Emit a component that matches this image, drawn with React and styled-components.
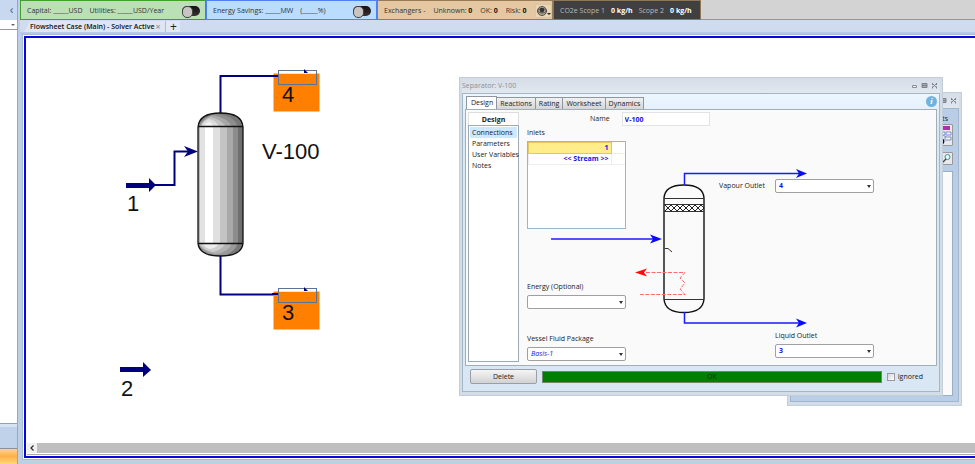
import styled, { createGlobalStyle } from 'styled-components';
import { useState } from 'react';

const flowStreams = [
  { id: '4', y: 70 },
  { id: '3', y: 288 },
];

const vesselBands = [
  [198, 2, '#b4b4b4'],
  [200, 5, '#e2e2e2'],
  [205, 8, '#ffffff'],
  [213, 7, '#e0e0e0'],
  [220, 7, '#c3c3c3'],
  [227, 6, '#a9a9a9'],
  [233, 5, '#8c8c8c'],
  [238, 6, '#6e6e6e'],
];

const tabs = ['Design', 'Reactions', 'Rating', 'Worksheet', 'Dynamics'];
const pages = ['Connections', 'Parameters', 'User Variables', 'Notes'];

function Flowsheet() {
  return (
    <Drawing aria-label='Flowsheet'>
      <defs>
        <clipPath id='vessel'>
          <path d='M198 127 Q199 113 220.5 113 Q242 113 243 127 V243 Q242 256 220.5 256 Q199 256 198 243 Z' />
        </clipPath>
      </defs>
      <g transform='translate(-27 -39)'>
        <g fill='none' stroke='#00007f' strokeWidth='2'>
          <path d='M154 185 H174.500 V151.500 H188' />
          <path d='M220.500 114 V76 H278' />
          <path d='M220.500 256 V294.500 H278' />
        </g>
        <g fill='#00007f'>
          <path d='M126 183 H149 V178 L156 185 L149 192 V188 H126 Z' />
          <path d='M120 367 H143 V362 L151 370 L143 377 V372 H120 Z' />
          <path d='M184 146 L198 151.500 L184 157 L188 151.500 Z' />
        </g>

        <g clipPath='url(#vessel)'>
          {vesselBands.map(([x, w, fill]) => <rect key={x} x={x} y='112' width={w} height='146' fill={fill} />)}
          <rect x='198' y='112' width='46' height='15' fill='#777' />
          <path d='M198 127 Q202 116 216 114 Q234 115 238 127 Z' fill='#8e8e8e' />
          <path d='M199 127 Q204 117 213 115 Q228 118 232 127 Z' fill='#a8a8a8' />
          <path d='M200 127 Q204 119 211 117 Q222 120 226 127 Z' fill='#c4c4c4' />
          <path d='M201 127 Q204 120 209 119 Q217 121 219 127 Z' fill='#dedede' />
          <path d='M203 127 Q206 122 210 122 Q213 124 213 127 Z' fill='#f2f2f2' />
          <rect x='198' y='243' width='46' height='15' fill='#777' />
          <path d='M198 243 H238 Q234 255 217 257 Q202 254 198 243 Z' fill='#999' />
          <path d='M198 243 H232 Q229 252 216 254 Q203 252 198 243 Z' fill='#b2b2b2' />
          <path d='M199 243 H226 Q222 250 213 252 Q203 250 199 243 Z' fill='#cecece' />
          <path d='M202 243 H219 Q217 248 210 249 Q205 248 202 243 Z' fill='#ececec' />
        </g>
        <path
          d='M198 127 Q199 113 220.500 113 Q242 113 243 127 V243 Q242 256 220.500 256 Q199 256 198 243 Z M198 126.500 H243 M198 243.500 H243'
          fill='none' stroke='#111' strokeWidth='1.300'
        />

        {flowStreams.map(({ id, y }) => (
          <g key={id}>
            <rect x='273.500' y={y + 3.5} width='46' height='38' fill='#ff8000' />
            <path d={`M272 ${y + 6} H278`} stroke='#00007f' strokeWidth='2' />
            <path d={`M279 ${y + 1} H316 V${y + 3.5} H279 Z`} fill='#fff' />
            <rect x='278.500' y={y + 0.5} width='38' height='14' fill='none' stroke='#5c7494' />
            <path d={`M304 ${y - 1} L308 ${y + 3} H304 Z`} fill='#00007f' />
            <FlowLabel x='282' y={y + 32}>{id}</FlowLabel>
          </g>
        ))}
        <FlowLabel x='127' y='211'>1</FlowLabel>
        <FlowLabel x='121' y='396'>2</FlowLabel>
        <FlowLabel x='262' y='159'>V-100</FlowLabel>
      </g>
    </Drawing>
  );
}

function SeparatorDiagram() {
  return (
    <DiagramLayer aria-hidden='true'>
      <g transform='translate(-519 -110)'>
        <path d='M664 198 Q665 185 684 185 Q703 185 704 198 V299 Q703 312.500 684 312.500 Q665 312.500 664 299 Z' fill='#fafafa' stroke='#111' strokeWidth='1.400' />
        <path d='M664 198.500 H704 M664 204.500 H704 M664 211.500 H704 M664 299.500 H704' stroke='#333' fill='none' />
        <path
          d='M665 205 L671 211 L677 205 L683 211 L689 205 L695 211 L701 205 L704 208 M665 211 L671 205 L677 211 L683 205 L689 211 L695 205 L701 211 L704 208'
          fill='none' stroke='#222'
        />
        <path d='M665 248.500 H668 L672 252' fill='none' stroke='#333' />
        <g fill='none' stroke='#1a1aff' strokeWidth='1.500'>
          <path d='M684.500 185 V173.500 H799' />
          <path d='M684.500 312 V323 H799' />
          <path d='M551 239 H653' />
        </g>
        <g fill='#0a0aff'>
          <path d='M796 169 L807 173.500 L796 178 L799 173.500 Z' />
          <path d='M796 318.500 L807 323 L796 327.500 L799 323 Z' />
          <path d='M650 234.500 L662 239 L650 243.500 L653 239 Z' />
        </g>
        <path d='M646 272.500 H685 L680 278 L685 283 L680 289 L685 294.500 H640' fill='none' stroke='#ff6b6b' strokeDasharray='4 1.500' />
        <path d='M635 272.500 L647 268.500 L644 272.500 L647 276.500 Z' fill='#ff0a0a' />
      </g>
    </DiagramLayer>
  );
}

function WindowButtons() {
  return (
    <ButtonGlyphs viewBox='0 0 28 8' aria-hidden='true'>
      <path d='M2.500 3.500 H6.500 V5.500 H2.500 Z' fill='#eee' stroke='#8a8f9a' />
      <path d='M12 1.500 H17 V5.500 H12 Z M12 3.500 H17' fill='#aaa' stroke='#7d8291' />
      <path d='M22.500 1.500 L26.500 5.500 M26.500 1.500 L22.500 5.500 M22.500 1 V3 M26.500 1 V3 M22.500 4.500 V6.500 M26.500 4.500 V6.500' stroke='#7d8291' />
    </ButtonGlyphs>
  );
}

function Combo({ id, label, value, inline, italic }) {
  return (
    <Field $inline={inline}>
      <label htmlFor={id}>{label}</label>
      <SelectBox>
        <Select id={id} defaultValue={value} $italic={italic}>
          <option>{value}</option>
        </Select>
      </SelectBox>
    </Field>
  );
}

function StatusBar() {
  return (
    <Toolbar>
      <Gauge $width={186} $gap={7} $border='#41a02c' $background='#bce0b6'>
        <span>Capital: _____USD</span>
        <span>Utilities: _____USD/Year</span>
        <Toggle type='checkbox' aria-label='Capital and utilities' />
      </Gauge>
      <Gauge $width={171} $gap={7} $border='#4b82f5' $background='#b9dcff'>
        <span>Energy Savings: _____MW</span>
        <span>(_____%)</span>
        <Toggle type='checkbox' aria-label='Energy savings' />
      </Gauge>
      <Gauge $width={176} $gap={8} $border='#967b58' $background='#e5c8a2'>
        <span>Exchangers -</span>
        <span>Unknown: <b>0</b></span>
        <span>OK: <b>0</b></span>
        <span>Risk: <b>0</b></span>
        <EyeButton aria-label='Exchanger view'>
          <svg width='15' height='12' viewBox='0 0 15 12'>
            <circle cx='6' cy='6' r='4.500' fill='#aaa493' stroke='#5b5348' />
            <path d='M1 6 Q6 1 11 6 Q6 10 1 6' fill='none' stroke='#5b5348' />
            <circle cx='6' cy='5' r='2.300' fill='#333' />
            <path d='M11 8 H15 L13 10 Z' fill='#222' />
          </svg>
        </EyeButton>
      </Gauge>
      <Gauge $width={148} $gap={6} $border='#8e7656' $background='#404040' $color='#b9b9b9'>
        <span>CO2e Scope 1</span>
        <b>0 kg/h</b>
        <span>Scope 2</span>
        <b>0 kg/h</b>
      </Gauge>
    </Toolbar>
  );
}

function SeparatorWindow() {
  const [name, setName] = useState('V-100');

  return (
    <Dialog role='dialog' aria-label='Separator: V-100'>
      <TitleBar>
        <span>Separator: V-100</span>
        <WindowButtons />
      </TitleBar>
      <DialogBody>
        <TabRow role='tablist'>
          {tabs.map((tab, i) => <Tab key={tab} role='tab' aria-selected={i === 0} $active={i === 0}>{tab}</Tab>)}
          <Info aria-label='Information'>i</Info>
        </TabRow>
        <TabPage>
          <Side>
            <SideTitle>Design</SideTitle>
            <SideList>
              {pages.map((page, i) => <SideItem key={page} $active={i === 0}>{page}</SideItem>)}
            </SideList>
          </Side>
          <Form>
            <SeparatorDiagram />
            <NameRow>
              <label htmlFor='name'>Name</label>
              <NameInput id='name' value={name} onChange={(e) => setName(e.target.value)} />
            </NameRow>
            <Columns>
              <InletColumn>
                <div>
                  <p id='inlets'>Inlets</p>
                  <InletBox>
                    <InletTable aria-labelledby='inlets'>
                      <tbody>
                        <InletRow $active><td>1</td><td /></InletRow>
                        <InletRow><td>&lt;&lt; Stream &gt;&gt;</td><td /></InletRow>
                      </tbody>
                    </InletTable>
                  </InletBox>
                </div>
                <PackageFields>
                  <Combo id='energy' label='Energy (Optional)' value='' />
                  <Combo id='fluid' label='Vessel Fluid Package' value='Basis-1' italic />
                </PackageFields>
              </InletColumn>
              <OutletColumn>
                <Combo id='vapour' label='Vapour Outlet' value='4' inline />
                <Combo id='liquid' label='Liquid Outlet' value='3' />
              </OutletColumn>
            </Columns>
          </Form>
        </TabPage>
        <Footer>
          <DeleteButton>Delete</DeleteButton>
          <Status role='status'>OK</Status>
          <Ignored>
            <input type='checkbox' />
            Ignored
          </Ignored>
        </Footer>
      </DialogBody>
    </Dialog>
  );
}

function BackWindow() {
  return (
    <BackDialog>
      <TitleBar>
        <span />
        <WindowButtons />
      </TitleBar>
      <BackBody>
        <p>ts</p>
        <ToolButton $height={22} aria-label='Charts'>
          <svg width='12' height='20' viewBox='0 0 12 20'>
            <rect x='1' y='1' width='9' height='4' fill='#b32bb8' />
            <path d='M1 7 H5 V10 H1 M6 7 H11 V10 H6 Z M5 12 H11 V15 H5 Z M3 10 L6 12' fill='#eef3ff' stroke='#7f91be' />
            <path d='M2 14 Q5 16 2 19' fill='none' stroke='#111' strokeWidth='2' />
          </svg>
        </ToolButton>
        <ToolButton $height={13} aria-label='Find'>
          <svg width='11' height='11' viewBox='0 0 11 11'>
            <circle cx='6.500' cy='4' r='2.500' fill='#dff' stroke='#478b88' />
            <path d='M5 6 L1 10' stroke='#4b4639' strokeWidth='1.500' />
          </svg>
        </ToolButton>
        <BackPanel />
      </BackBody>
    </BackDialog>
  );
}

export default function App() {
  return (
    <>
      <GlobalStyle />
      <Page>
        <NavPane>
          <NavHeader aria-label='Collapse'>‹</NavHeader>
          <NavFilter />
          <NavTree />
          <NavGroup />
          <NavGroup $active />
        </NavPane>
        <Main>
          <StatusBar />
          <DocumentTabs>
            <DocumentTab>
              Flowsheet Case (Main) - Solver Active
              <CloseTab aria-label='Close tab'>×</CloseTab>
            </DocumentTab>
            <AddTab aria-label='New tab'>+</AddTab>
          </DocumentTabs>
          <Frame>
            <Canvas>
              <Flowsheet />
              <BackWindow />
              <SeparatorWindow />
            </Canvas>
            <ScrollBar>
              <button aria-label='Scroll left'>
                <svg width='4' height='6' viewBox='0 0 4 6'><path d='M3.500 0.500 L1 3 L3.500 5.500' fill='none' stroke='#333' strokeWidth='1.300' /></svg>
              </button>
            </ScrollBar>
          </Frame>
        </Main>
      </Page>
    </>
  );
}

const GlobalStyle = createGlobalStyle`
  * {
    box-sizing: border-box;
  }

  body {
    margin: 0;
    overflow: hidden;
    font-family: 'Open Sans', 'Noto Sans', sans-serif;
    font-size: 7px;
    line-height: 10px;
    color: #222;
  }

  button, input, select {
    margin: 0;
    padding: 0;
    font: inherit;
    color: inherit;
  }

  p {
    margin: 0;
  }
`;

const Page = styled.div`
  display: flex;
  height: 100vh;
  background: #bdd0e6;
`;

const NavPane = styled.nav`
  flex: none;
  display: flex;
  flex-direction: column;
  width: 18px;
  border-right: 1px solid #94a9c0;
`;

const NavHeader = styled.button`
  height: 20px;
  padding-left: 6px;
  border: 0;
  background: #c8d8f0;
  color: #4a5f85;
  font-size: 12px;
`;

const NavFilter = styled.div`
  display: flex;
  align-items: center;
  justify-content: flex-end;
  height: 10px;
  padding-right: 2px;
  background: #fff;
  border-bottom: 1px solid #999;

  &::after {
    content: '';
    border: 2px solid transparent;
    border-top-color: #666;
    border-bottom: 0;
  }
`;

const NavTree = styled.div`
  flex: 1;
  background: #fff;
  border-bottom: 1px solid #8fa3b8;
`;

const NavGroup = styled.div`
  height: ${({ $active }) => ($active ? '16px' : '24px')};
  border-top: ${({ $active }) => ($active ? '1px solid #8c8f95' : '3px solid #d5e3f2')};
  background: ${({ $active }) => ($active ? 'linear-gradient(#ffd196, #ffb04c 50%, #ffd879)' : '#bfd2ea')};
`;

const Main = styled.main`
  flex: 1;
  display: flex;
  flex-direction: column;
  min-width: 0;
  padding: 0 0 5px 2px;
`;

const Toolbar = styled.header`
  display: flex;
  height: 20px;
  background: #d3d3d3;
  border-bottom: 1px solid #969696;
`;

const Gauge = styled.div`
  flex: none;
  display: flex;
  align-items: center;
  gap: ${({ $gap }) => $gap}px;
  width: ${({ $width }) => $width}px;
  height: 20px;
  padding: 2px 5px 0 6px;
  border: 1px solid ${({ $border }) => $border};
  background: ${({ $background }) => $background};
  color: ${({ $color }) => $color || '#333'};
  white-space: pre;

  b {
    color: ${({ $color }) => ($color ? '#fff' : '#111')};
  }
`;

const Toggle = styled.input`
  appearance: none;
  width: 18px;
  height: 10px;
  margin-left: auto;
  border-radius: 5px;
  background: linear-gradient(#111, #3a3232);

  &::before {
    content: '';
    display: block;
    width: 9px;
    height: 10px;
    border: 1px solid #444;
    border-radius: 5px;
    background: #c9c4c4;
  }
`;

const EyeButton = styled.button`
  display: flex;
  margin-left: auto;
  border: 1px solid #d8c6a7;
  background: #ead6b7;
`;

const DocumentTabs = styled.div`
  display: flex;
  align-items: flex-end;
  height: 15px;
  padding-left: 4px;
  border-bottom: 3px solid #b9cbdf;
  background: #cfdcef;
`;

const DocumentTab = styled.div`
  display: flex;
  height: 11px;
  padding: 0 4px 0 6px;
  border-right: 1px solid #b3bdcb;
  background: #dde6f2;
  clip-path: polygon(0 100%, 6px 0, 100% 0, 100% 100%);
  font-weight: 600;
  line-height: 12px;
  color: #111;
`;

const CloseTab = styled.button`
  width: 7px;
  border: 0;
  background: none;
  color: #888;
  font-size: 9px;
  font-weight: 400;
`;

const AddTab = styled.button`
  width: 14px;
  height: 11px;
  border: 0;
  background: #e0e8f3;
  font-size: 12px;
`;

const Frame = styled.section`
  flex: 1;
  display: flex;
  flex-direction: column;
  min-height: 0;
  margin-left: 3px;
  border: 1px solid #fff;
  border-right: 0;
  outline: 1px solid #a6bdd4;
  box-shadow: inset 2px 2px #0808dc, inset 0 -2px #0808dc;
  padding: 3px 0 5px 3px;
  background: #fff;
`;

const Canvas = styled.div`
  position: relative;
  flex: 1;
  min-height: 0;
  overflow: hidden;
`;

const Drawing = styled.svg`
  display: block;
  width: 100%;
  height: 100%;
`;

const FlowLabel = styled.text`
  font-family: 'Liberation Sans', Arial, sans-serif;
  font-size: 22px;
  fill: #111;
`;

const ScrollBar = styled.div`
  height: 10px;
  background: #bfbfbf;
  box-shadow: 0 1px #fff, 0 2px #aaa;

  button {
    display: flex;
    align-items: center;
    justify-content: center;
    width: 10px;
    height: 10px;
    border: 0;
    background: #f0f0f0;
  }
`;

const Dialog = styled.section`
  position: absolute;
  left: 432px;
  top: 38px;
  width: 484px;
  padding: 0 2px 3px;
  border: 1px solid #c4ced8;
  background: #d3dde8;
`;

const BackDialog = styled(Dialog)`
  left: 760px;
  top: 53px;
  width: 175px;
`;

const TitleBar = styled.div`
  display: flex;
  align-items: center;
  justify-content: space-between;
  height: 15px;
  background: linear-gradient(#d5dde8, #e1e7ef);
  color: #8b8f96;
`;

const ButtonGlyphs = styled.svg`
  width: 28px;
  height: 8px;
  margin-right: 2px;
`;

const DialogBody = styled.div`
  border: 1px solid #a5b5c2;
  background: linear-gradient(#edf6ff, #d9e6f4 40px);
  padding: 2px 2px 7px;
`;

const BackBody = styled.div`
  display: flex;
  flex-direction: column;
  align-items: flex-end;
  height: 294px;
  padding: 5px 5px 5px 0;
  border: 1px solid #a3b6ce;
  background: #b9cde7;

  p {
    margin-right: 5px;
  }
`;

const ToolButton = styled.button`
  display: flex;
  align-items: center;
  justify-content: center;
  width: 14px;
  height: ${({ $height }) => $height}px;
  margin-bottom: 6px;
  border: 1px solid #999;
  border-radius: 1px;
  background: #e6e9ed;
`;

const BackPanel = styled.div`
  flex: 1;
  width: 85px;
  border: 1px solid #9caec4;
  background: #fafafa;
`;

const TabRow = styled.div`
  display: flex;
  align-items: flex-end;
  height: 13px;
  padding-left: 1px;
`;

const Tab = styled.button`
  height: ${({ $active }) => ($active ? '13px' : '12px')};
  padding: 0 3px;
  padding-left: ${({ $active }) => ($active ? '4px' : '3px')};
  border: 1px solid #8f969e;
  border-bottom: 0;
  border-left-width: ${({ $active }) => ($active ? '1px' : '0')};
  background: ${({ $active }) => ($active ? '#fff' : 'linear-gradient(#f1f1f1, #d5d5d5)')};
`;

const Info = styled.button`
  width: 11px;
  height: 11px;
  margin: 0 0 2px auto;
  border: 0;
  border-radius: 50%;
  background: #72b3de;
  color: #fff;
  font: italic bold 9px/11px 'Liberation Serif', serif;
`;

const TabPage = styled.div`
  display: flex;
  height: 257px;
  border: 1px solid #a1afb9;
  background: #fafafa;
`;

const Side = styled.div`
  display: flex;
  flex-direction: column;
  width: 53px;
  padding: 2px 0 3px 2px;
`;

const SideTitle = styled.h2`
  margin: 0;
  height: 13px;
  border: 1px solid #ddd;
  border-bottom: 0;
  background: #fff;
  font-size: 7px;
  line-height: 13px;
  text-align: center;
`;

const SideList = styled.ul`
  flex: 1;
  margin: 0;
  padding: 1px;
  border: 1px solid #9caab5;
  background: #fff;
  list-style: none;
`;

const SideItem = styled.li`
  height: 11px;
  padding-left: 2px;
  line-height: 11px;
  white-space: nowrap;
  background: ${({ $active }) => ($active ? '#cde8ff' : 'none')};
`;

const Form = styled.div`
  position: relative;
  flex: 1;
`;

const DiagramLayer = styled.svg`
  position: absolute;
  inset: 0;
  width: 100%;
  height: 100%;
  pointer-events: none;
`;

const NameRow = styled.div`
  display: flex;
  align-items: center;
  gap: 12px;
  height: 18px;
  padding-left: 71px;
`;

const NameInput = styled.input`
  width: 88px;
  height: 14px;
  padding: 0 2px;
  border: 1px solid #e3e3e3;
  background: #fff;
  font-weight: 700;
  color: #1414e6;
`;

const Columns = styled.div`
  display: flex;
  justify-content: space-between;
  padding: 0 62px 0 8px;
`;

const InletColumn = styled.div`
  width: 99px;
`;

const InletBox = styled.div`
  height: 88px;
  margin-top: 3px;
  border: 1px solid #9db3ca;
  background: #fff;
`;

const InletTable = styled.table`
  width: 100%;
  border-collapse: collapse;
  font-weight: 700;
  color: #1414e6;

  td {
    height: 11px;
    padding: 0 2px;
    text-align: right;
  }

  td:last-child {
    width: 14px;
  }
`;

const InletRow = styled.tr`
  border-bottom: 1px solid #eee;

  td:first-child {
    background: ${({ $active }) => ($active ? '#ffec8b' : '#fff')};
    border: 1px solid ${({ $active }) => ($active ? '#e3c95b' : '#eee')};
  }
`;

const PackageFields = styled.div`
  display: flex;
  flex-direction: column;
  gap: 25px;
  margin-top: 53px;
`;

const OutletColumn = styled.div`
  display: flex;
  flex-direction: column;
  align-items: flex-end;
  gap: 138px;
  padding-top: 51px;
`;

const Field = styled.div`
  display: flex;
  flex-direction: ${({ $inline }) => ($inline ? 'row' : 'column')};
  align-items: ${({ $inline }) => ($inline ? 'center' : 'flex-start')};
  gap: ${({ $inline }) => ($inline ? '10px' : '3px')};
`;

const SelectBox = styled.div`
  position: relative;
  width: 99px;
  height: 14px;

  &::after {
    content: '';
    position: absolute;
    right: 3px;
    top: 6px;
    border: 2px solid transparent;
    border-top: 3px solid #333;
    border-bottom: 0;
    pointer-events: none;
  }
`;

const Select = styled.select`
  display: block;
  appearance: none;
  width: 100%;
  height: 100%;
  padding: 0 3px;
  border: 1px solid #a0a0a0;
  border-radius: 2px;
  background: #fff;
  color: #1414e6;
  font-weight: ${({ $italic }) => ($italic ? 400 : 700)};
  font-style: ${({ $italic }) => ($italic ? 'italic' : 'normal')};
`;

const Footer = styled.div`
  display: flex;
  align-items: center;
  gap: 5px;
  padding: 3px 14px 0 5px;
`;

const DeleteButton = styled.button`
  width: 67px;
  height: 15px;
  border: 1px solid #999fa6;
  border-radius: 2px;
  background: linear-gradient(#f5f5f5, #d2d2d2);
`;

const Status = styled.div`
  flex: 1;
  height: 12px;
  border: 1px solid #71866f;
  background: #008000;
  color: #002b00;
  text-align: center;
`;

const Ignored = styled.label`
  display: flex;
  align-items: center;
  gap: 3px;

  input {
    appearance: none;
    width: 8px;
    height: 8px;
    border: 1px solid #96999d;
    background: linear-gradient(135deg, #d5d5d5, #fff);
  }
`;
